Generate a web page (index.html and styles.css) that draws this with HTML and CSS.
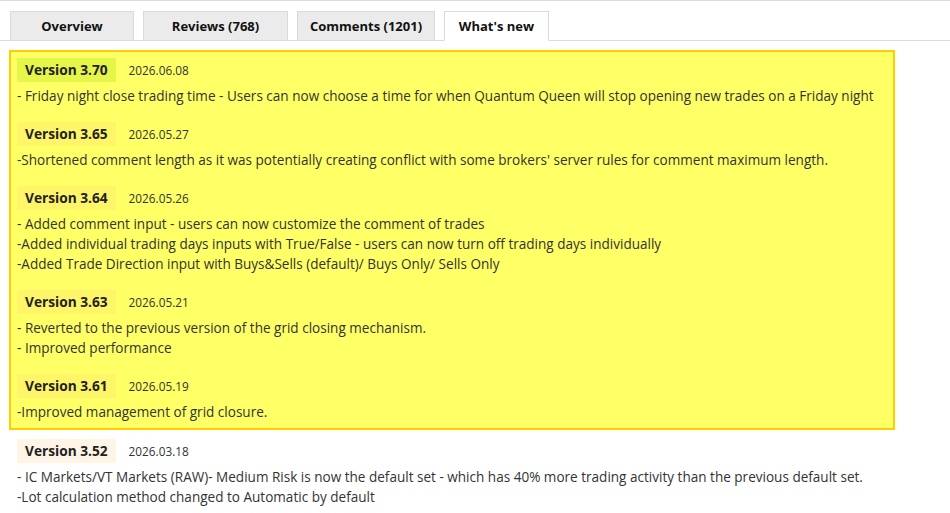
FILE: index.html
```html
<!DOCTYPE html>
<html lang="en">
<head>
    <meta charset="UTF-8">
    <meta name="viewport" content="width=device-width, initial-scale=1.0">
    <title>Quantum Queen - What's new</title>
    <link rel="stylesheet" href="styles.css">
</head>
<body>
    <div class="page">
        <!-- Product tabs -->
        <nav class="tabs">
            <a href="#" class="tab tab-overview">Overview</a>
            <a href="#" class="tab tab-reviews">Reviews (768)</a>
            <a href="#" class="tab tab-comments">Comments (1201)</a>
            <a href="#" class="tab tab-news active">What's new</a>
        </nav>

        <div class="content">
            <!-- Updates since the last purchase are highlighted -->
            <div class="new-versions">
                <div class="version-entry">
                    <div class="version-head">
                        <span class="version-label latest">Version 3.70</span>
                        <span class="version-date">2026.06.08</span>
                    </div>
                    <div class="version-text">- Friday night close trading time - Users can now choose a time for when Quantum Queen will stop opening new trades on a Friday night</div>
                </div>

                <div class="version-entry">
                    <div class="version-head">
                        <span class="version-label">Version 3.65</span>
                        <span class="version-date">2026.05.27</span>
                    </div>
                    <div class="version-text">-Shortened comment length as it was potentially creating conflict with some brokers' server rules for comment maximum length.</div>
                </div>

                <div class="version-entry">
                    <div class="version-head">
                        <span class="version-label">Version 3.64</span>
                        <span class="version-date">2026.05.26</span>
                    </div>
                    <div class="version-text">- Added comment input - users can now customize the comment of trades<br>-Added individual trading days inputs with True/False - users can now turn off trading days individually<br>-Added Trade Direction input with Buys&amp;Sells (default)/ Buys Only/ Sells Only</div>
                </div>

                <div class="version-entry">
                    <div class="version-head">
                        <span class="version-label">Version 3.63</span>
                        <span class="version-date">2026.05.21</span>
                    </div>
                    <div class="version-text">- Reverted to the previous version of the grid closing mechanism.<br>- Improved performance</div>
                </div>

                <div class="version-entry">
                    <div class="version-head">
                        <span class="version-label">Version 3.61</span>
                        <span class="version-date">2026.05.19</span>
                    </div>
                    <div class="version-text">-Improved management of grid closure.</div>
                </div>
            </div>

            <div class="version-entry">
                <div class="version-head">
                    <span class="version-label">Version 3.52</span>
                    <span class="version-date">2026.03.18</span>
                </div>
                <div class="version-text">- IC Markets/VT Markets (RAW)- Medium Risk is now the default set - which has 40% more trading activity than the previous default set.<br>-Lot calculation method changed to Automatic by default</div>
            </div>
        </div>
    </div>
</body>
</html>
```

FILE: styles.css
```css
:root {
    --border-color: #dadada;
    --tab-bg: #ebebeb;
    --text-color: #333;
    --new-bg: #ffff66;
    --new-border: #ffcc00;
}

body {
    margin: 0;
    font-family: 'Open Sans', 'Liberation Sans', sans-serif;
    font-size: 13.55px;
    color: var(--text-color);
    background: #fff;
}

.page {
    border-top: 1px solid var(--border-color);
    min-height: 100vh;
}

/* Tabs */
.tabs {
    display: flex;
    gap: 9px;
    padding: 10px 0 0 10px;
    border-bottom: 1px solid var(--border-color);
}

.tab {
    display: block;
    height: 28px;
    line-height: 28px;
    margin-bottom: -1px;
    text-align: center;
    background: var(--tab-bg);
    border: 1px solid var(--border-color);
    color: #111;
    font-weight: bold;
    font-size: 13px;
    text-decoration: none;
}

.tab.active {
    background: #fff;
    border-bottom-color: #fff;
}

.tab-overview { width: 122px; }
.tab-reviews { width: 143px; }
.tab-comments { width: 136px; }
.tab-news { width: 103px; }

/* Version history */
.content {
    padding: 9px 55px 0 9px;
}

.new-versions {
    background: var(--new-bg);
    border: 2px solid var(--new-border);
    padding: 6px;
    margin-bottom: 9px;
}

.new-versions .version-entry:last-child {
    margin-bottom: 0;
}

.content > .version-entry {
    padding-left: 8px;
}

.version-entry {
    margin-bottom: 16px;
}

.version-head {
    display: flex;
    align-items: center;
    gap: 13px;
    margin-bottom: 4px;
}

.version-label {
    display: inline-block;
    height: 24px;
    line-height: 24px;
    padding: 0 8px;
    font-weight: bold;
    font-size: 13.7px;
    color: #222;
    background: rgba(255, 200, 120, 0.18);
}

.version-label.latest {
    background: #e6f54a;
}

.version-date {
    font-size: 11.8px;
    color: #333;
}

.version-text {
    line-height: 20px;
}
```
